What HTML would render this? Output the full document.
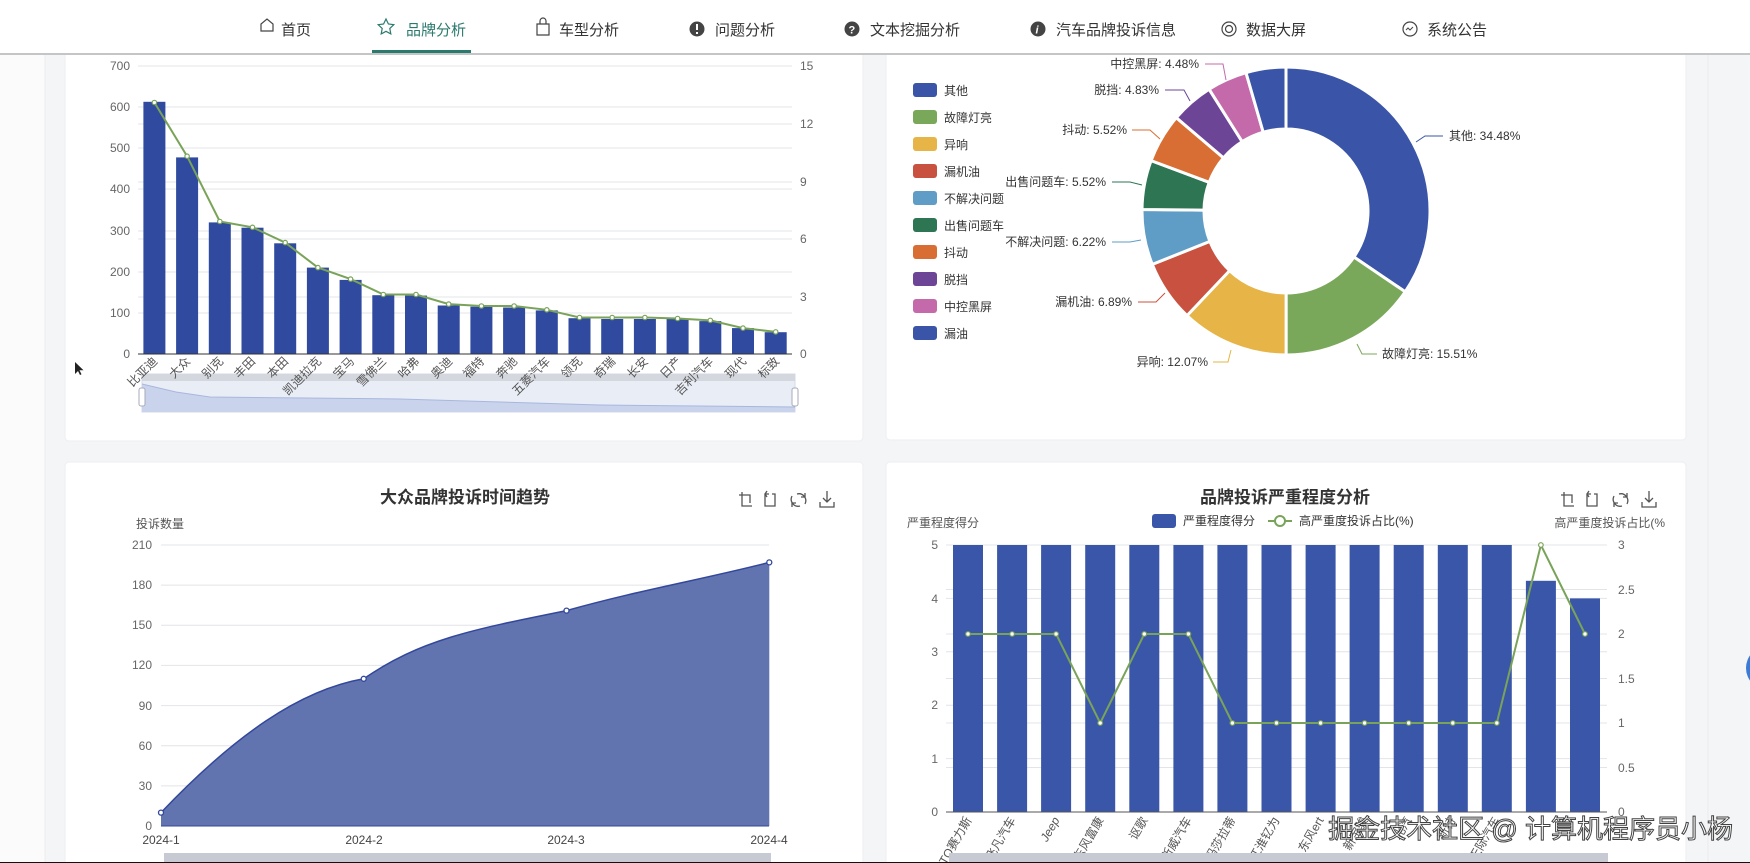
<!DOCTYPE html>
<html><head><meta charset="utf-8"><style>
html,body{margin:0;padding:0;width:1750px;height:863px;overflow:hidden;background:#f4f5f7;font-family:"Liberation Sans","Noto Sans CJK SC",sans-serif;}
svg{position:absolute;left:0;top:0}
text{font-family:"Liberation Sans","Noto Sans CJK SC",sans-serif;}
</style></head><body>
<svg width="1750" height="863" viewBox="0 0 1750 863" xmlns="http://www.w3.org/2000/svg">
<!-- side lines -->
<rect x="0" y="0" width="45" height="863" fill="#fbfbfc"/>
<line x1="45" y1="0" x2="45" y2="863" stroke="#ececee"/>
<line x1="1708" y1="0" x2="1708" y2="863" stroke="#ececee"/>
<!-- cards -->
<rect x="65" y="40" width="798" height="401" rx="4" fill="#fff" stroke="#eceef1"/>
<rect x="886" y="40" width="800" height="400" rx="4" fill="#fff" stroke="#eceef1"/>
<rect x="65" y="462" width="798" height="420" rx="4" fill="#fff" stroke="#eceef1"/>
<rect x="886" y="462" width="800" height="420" rx="4" fill="#fff" stroke="#eceef1"/>
<circle cx="1768" cy="668" r="22" fill="#3b7bd8"/>

<!-- NAV -->
<rect x="0" y="0" width="1750" height="53" fill="#fff"/>
<rect x="0" y="53" width="1750" height="2" fill="#c4c5c7"/>
<rect x="372" y="50" width="99" height="3" fill="#2b7a6e"/>
<g font-size="15" fill="#333">
<path d="M261 31v-7l6-5 6 5v7z" fill="none" stroke="#444" stroke-width="1.2"/>
<text x="281" y="35">首页</text>
<path d="M386 19l2.4 5 5.4.7-4 3.8 1 5.4-4.8-2.6-4.8 2.6 1-5.4-4-3.8 5.4-.7z" fill="none" stroke="#2b7a6e" stroke-width="1.2"/>
<text x="406" y="35" fill="#2b7a6e">品牌分析</text>
<path d="M537 24h12v11h-12z M540 24v-3a3 3 0 0 1 6 0v3" fill="none" stroke="#444" stroke-width="1.2"/>
<text x="559" y="35">车型分析</text>
<circle cx="697" cy="29" r="7.5" fill="#444"/><rect x="696" y="24" width="2" height="6" fill="#fff"/><rect x="696" y="32" width="2" height="2" fill="#fff"/>
<text x="715" y="35">问题分析</text>
<circle cx="852" cy="29" r="7.5" fill="#444"/><text x="848.5" y="33.5" font-size="11" font-weight="bold" fill="#fff">?</text>
<text x="870" y="35">文本挖掘分析</text>
<circle cx="1038" cy="29" r="7.5" fill="#444"/><text x="1035.5" y="33.5" font-size="11" font-style="italic" font-weight="bold" fill="#fff">i</text>
<text x="1056" y="35">汽车品牌投诉信息</text>
<circle cx="1229" cy="29" r="7" fill="none" stroke="#444" stroke-width="1.2"/><circle cx="1229" cy="29" r="3.5" fill="none" stroke="#444" stroke-width="1.2"/>
<text x="1246" y="35">数据大屏</text>
<circle cx="1410" cy="29" r="7" fill="none" stroke="#444" stroke-width="1.2"/><path d="M1406 30l2-2 2 2 3-3" fill="none" stroke="#444"/>
<text x="1427" y="35">系统公告</text>
</g>

<!-- CHART 1 -->
<g stroke="#e3e4e8" stroke-width="1">
<line x1="138" y1="66" x2="792" y2="66"/><line x1="138" y1="107" x2="792" y2="107"/><line x1="138" y1="148" x2="792" y2="148"/><line x1="138" y1="189" x2="792" y2="189"/><line x1="138" y1="231" x2="792" y2="231"/><line x1="138" y1="272" x2="792" y2="272"/><line x1="138" y1="313" x2="792" y2="313"/>
<line x1="138" y1="124" x2="792" y2="124"/><line x1="138" y1="182" x2="792" y2="182"/><line x1="138" y1="239" x2="792" y2="239"/><line x1="138" y1="297" x2="792" y2="297"/>
</g>
<g font-size="12" fill="#666" text-anchor="end">
<text x="130" y="70">700</text><text x="130" y="111">600</text><text x="130" y="152">500</text><text x="130" y="193">400</text><text x="130" y="235">300</text><text x="130" y="276">200</text><text x="130" y="317">100</text><text x="130" y="358">0</text>
</g>
<g font-size="12" fill="#666">
<text x="800" y="70">15</text><text x="800" y="128">12</text><text x="800" y="186">9</text><text x="800" y="243">6</text><text x="800" y="301">3</text><text x="800" y="358">0</text>
</g>
<g fill="#2f4a9f">
<rect x="143.4" y="101.8" width="22" height="252.2"/><rect x="176.1" y="157.4" width="22" height="196.6"/><rect x="208.8" y="222.4" width="22" height="131.6"/><rect x="241.5" y="227.7" width="22" height="126.3"/><rect x="274.2" y="243.3" width="22" height="110.7"/><rect x="306.9" y="267.6" width="22" height="86.4"/><rect x="339.6" y="279.9" width="22" height="74.1"/><rect x="372.3" y="295.2" width="22" height="58.8"/><rect x="405" y="295.6" width="22" height="58.4"/><rect x="437.7" y="305.5" width="22" height="48.5"/><rect x="470.4" y="306.7" width="22" height="47.3"/><rect x="503.1" y="307.5" width="22" height="46.5"/><rect x="535.8" y="310.4" width="22" height="43.6"/><rect x="568.5" y="318.2" width="22" height="35.8"/><rect x="601.2" y="319" width="22" height="35"/><rect x="633.9" y="319" width="22" height="35"/><rect x="666.6" y="319" width="22" height="35"/><rect x="699.3" y="321.1" width="22" height="32.9"/><rect x="732" y="328.1" width="22" height="25.9"/><rect x="764.7" y="332.2" width="22" height="21.8"/>
</g>
<line x1="138" y1="354" x2="792" y2="354" stroke="#333"/>
<polyline fill="none" stroke="#7aa35a" stroke-width="2" points="154.4,102.5 187.1,156.2 219.8,221.5 252.5,227.3 285.2,242.6 317.9,267.6 350.6,279.1 383.3,294.5 416,294.5 448.7,304.1 481.4,306 514.1,306 546.8,309.8 579.5,317.5 612.2,317.5 644.9,317.5 677.6,318.5 710.3,320.4 743,328.1 775.7,331.9"/>
<g fill="#fff" stroke="#7aa35a" stroke-width="1.2">
<circle cx="154.4" cy="102.5" r="2.2"/><circle cx="187.1" cy="156.2" r="2.2"/><circle cx="219.8" cy="221.5" r="2.2"/><circle cx="252.5" cy="227.3" r="2.2"/><circle cx="285.2" cy="242.6" r="2.2"/><circle cx="317.9" cy="267.6" r="2.2"/><circle cx="350.6" cy="279.1" r="2.2"/><circle cx="383.3" cy="294.5" r="2.2"/><circle cx="416" cy="294.5" r="2.2"/><circle cx="448.7" cy="304.1" r="2.2"/><circle cx="481.4" cy="306" r="2.2"/><circle cx="514.1" cy="306" r="2.2"/><circle cx="546.8" cy="309.8" r="2.2"/><circle cx="579.5" cy="317.5" r="2.2"/><circle cx="612.2" cy="317.5" r="2.2"/><circle cx="644.9" cy="317.5" r="2.2"/><circle cx="677.6" cy="318.5" r="2.2"/><circle cx="710.3" cy="320.4" r="2.2"/><circle cx="743" cy="328.1" r="2.2"/><circle cx="775.7" cy="331.9" r="2.2"/>
</g>
<!-- slider -->
<rect x="142" y="374" width="653" height="38" fill="#e9edf6" stroke="#d3dae9"/>
<rect x="142" y="374" width="653" height="7" fill="#d4d7de"/>
<path d="M142 384 L176 392 L210 397 L400 399 L600 405 L795 407 L795 412 L142 412Z" fill="#c9d3ec"/>
<path d="M142 384 L176 392 L210 397 L400 399 L600 405 L795 407" fill="none" stroke="#a9b7de"/>
<rect x="139" y="388" width="6" height="18" rx="2" fill="#fff" stroke="#aab"/>
<rect x="792" y="388" width="6" height="18" rx="2" fill="#fff" stroke="#aab"/>
<g font-size="12" fill="#555" text-anchor="end">
<text transform="translate(158,362) rotate(-45)">比亚迪</text><text transform="translate(191,362) rotate(-45)">大众</text><text transform="translate(224,362) rotate(-45)">别克</text><text transform="translate(256,362) rotate(-45)">丰田</text><text transform="translate(289,362) rotate(-45)">本田</text><text transform="translate(322,362) rotate(-45)">凯迪拉克</text><text transform="translate(355,362) rotate(-45)">宝马</text><text transform="translate(387,362) rotate(-45)">雪佛兰</text><text transform="translate(420,362) rotate(-45)">哈弗</text><text transform="translate(453,362) rotate(-45)">奥迪</text><text transform="translate(485,362) rotate(-45)">福特</text><text transform="translate(518,362) rotate(-45)">奔驰</text><text transform="translate(551,362) rotate(-45)">五菱汽车</text><text transform="translate(583,362) rotate(-45)">领克</text><text transform="translate(616,362) rotate(-45)">奇瑞</text><text transform="translate(649,362) rotate(-45)">长安</text><text transform="translate(682,362) rotate(-45)">日产</text><text transform="translate(714,362) rotate(-45)">吉利汽车</text><text transform="translate(747,362) rotate(-45)">现代</text><text transform="translate(780,362) rotate(-45)">标致</text>
</g>
<path d="M75 362v12l3-3 2 4 1.5-.7-2-4h4z" fill="#222"/>

<!-- CHART 2 PIE -->
<g stroke="#fff" stroke-width="3" stroke-linejoin="round">
<path d="M1286 67A144 144 0 0 1 1405.2 291.8L1353.9 257A82 82 0 0 0 1286 129Z" fill="#3a55a8"/>
<path d="M1405.2 291.8A144 144 0 0 1 1286.1 355L1286.1 293A82 82 0 0 0 1353.9 257Z" fill="#7aa85a"/>
<path d="M1286.1 355A144 144 0 0 1 1187 315.6L1229.6 270.6A82 82 0 0 0 1286.1 293Z" fill="#e6b447"/>
<path d="M1187 315.6A144 144 0 0 1 1152.3 264.4L1209.9 241.4A82 82 0 0 0 1229.6 270.6Z" fill="#c8513f"/>
<path d="M1152.3 264.4A144 144 0 0 1 1142 209.5L1204 210.1A82 82 0 0 0 1209.9 241.4Z" fill="#5f9dc6"/>
<path d="M1142 209.5A144 144 0 0 1 1151.1 160.6L1209.2 182.3A82 82 0 0 0 1204 210.1Z" fill="#2e7553"/>
<path d="M1151.1 160.6A144 144 0 0 1 1176.3 117.7L1223.5 157.9A82 82 0 0 0 1209.2 182.3Z" fill="#d86e33"/>
<path d="M1176.3 117.7A144 144 0 0 1 1209.1 89.2L1242.2 141.7A82 82 0 0 0 1223.5 157.9Z" fill="#6d4597"/>
<path d="M1209.1 89.2A144 144 0 0 1 1246 72.7L1263.2 132.2A82 82 0 0 0 1242.2 141.7Z" fill="#c46aab"/>
<path d="M1246 72.7A144 144 0 0 1 1286 67L1286 129A82 82 0 0 0 1263.2 132.2Z" fill="#3a55a8"/>
</g>
<g fill="none" stroke-width="1">
<polyline points="1416,142 1425,136 1443,136" stroke="#3a55a8"/>
<polyline points="1357,344 1362,354 1377,354" stroke="#7aa85a"/>
<polyline points="1231,350 1228,362 1213,362" stroke="#e6b447"/>
<polyline points="1165,293 1156,302 1138,302" stroke="#c8513f"/>
<polyline points="1141,240 1130,242 1112,242" stroke="#5f9dc6"/>
<polyline points="1142,185 1130,182 1112,182" stroke="#2e7553"/>
<polyline points="1160,139 1150,130 1132,130" stroke="#d86e33"/>
<polyline points="1190,101 1184,90 1165,90" stroke="#6d4597"/>
<polyline points="1226,80 1223,64 1205,64" stroke="#c46aab"/>
</g>
<g font-size="12" fill="#333">
<text x="1449" y="140">其他: 34.48%</text>
<text x="1382" y="358">故障灯亮: 15.51%</text>
<text x="1208" y="366" text-anchor="end">异响: 12.07%</text>
<text x="1132" y="306" text-anchor="end">漏机油: 6.89%</text>
<text x="1106" y="246" text-anchor="end">不解决问题: 6.22%</text>
<text x="1106" y="186" text-anchor="end">出售问题车: 5.52%</text>
<text x="1127" y="134" text-anchor="end">抖动: 5.52%</text>
<text x="1159" y="94" text-anchor="end">脱挡: 4.83%</text>
<text x="1199" y="68" text-anchor="end">中控黑屏: 4.48%</text>
</g>
<g font-size="12" fill="#333">
<rect x="913" y="83" width="24" height="14" rx="3" fill="#3a55a8"/><text x="944" y="95">其他</text>
<rect x="913" y="110" width="24" height="14" rx="3" fill="#7aa85a"/><text x="944" y="122">故障灯亮</text>
<rect x="913" y="137" width="24" height="14" rx="3" fill="#e6b447"/><text x="944" y="149">异响</text>
<rect x="913" y="164" width="24" height="14" rx="3" fill="#c8513f"/><text x="944" y="176">漏机油</text>
<rect x="913" y="191" width="24" height="14" rx="3" fill="#5f9dc6"/><text x="944" y="203">不解决问题</text>
<rect x="913" y="218" width="24" height="14" rx="3" fill="#2e7553"/><text x="944" y="230">出售问题车</text>
<rect x="913" y="245" width="24" height="14" rx="3" fill="#d86e33"/><text x="944" y="257">抖动</text>
<rect x="913" y="272" width="24" height="14" rx="3" fill="#6d4597"/><text x="944" y="284">脱挡</text>
<rect x="913" y="299" width="24" height="14" rx="3" fill="#c46aab"/><text x="944" y="311">中控黑屏</text>
<rect x="913" y="326" width="24" height="14" rx="3" fill="#3a55a8"/><text x="944" y="338">漏油</text>
</g>

<!-- toolbox icon group def -->
<defs>
<g id="tb" fill="none" stroke="#555" stroke-width="1.3">
<path d="M3 3v14h10 M0 6h11v8"/>
<path d="M30 5h-4v12h10v-12h-3 M28 2l-2 3 2 3"/>
<path d="M58 5a7 7 0 0 1 8 10 M61 17a7 7 0 0 1-8-10 M66 4v4h-4 M53 18v-4h4"/>
<path d="M88 2v11 M84 9l4 4 4-4 M81 13v5h14v-5"/>
</g>
</defs>

<!-- CHART 3 -->
<text x="465" y="503" font-size="17" font-weight="bold" fill="#333" text-anchor="middle">大众品牌投诉时间趋势</text>
<use href="#tb" x="739" y="489"/>
<text x="136" y="528" font-size="12" fill="#555">投诉数量</text>
<g stroke="#e3e4e8">
<line x1="161" y1="545" x2="769" y2="545"/><line x1="161" y1="585.1" x2="769" y2="585.1"/><line x1="161" y1="625.3" x2="769" y2="625.3"/><line x1="161" y1="665.4" x2="769" y2="665.4"/><line x1="161" y1="705.6" x2="769" y2="705.6"/><line x1="161" y1="745.7" x2="769" y2="745.7"/><line x1="161" y1="785.9" x2="769" y2="785.9"/>
</g>
<g font-size="12" fill="#666" text-anchor="end">
<text x="152" y="549">210</text><text x="152" y="589">180</text><text x="152" y="629">150</text><text x="152" y="669">120</text><text x="152" y="710">90</text><text x="152" y="750">60</text><text x="152" y="790">30</text><text x="152" y="830">0</text>
</g>
<path d="M161 812.6 C235 735 300 690 363.7 678.8 C420 640 470 630 566.5 610.6 C640 590 700 580 769.3 562.4 L769.3 826 L161 826Z" fill="#6274b0"/>
<path d="M161 812.6 C235 735 300 690 363.7 678.8 C420 640 470 630 566.5 610.6 C640 590 700 580 769.3 562.4" fill="none" stroke="#33489a" stroke-width="1.5"/>
<line x1="161" y1="826" x2="769" y2="826" stroke="#33489a"/>
<g fill="#fff" stroke="#33489a" stroke-width="1.3"><circle cx="161" cy="812.6" r="2.5"/><circle cx="363.7" cy="678.8" r="2.5"/><circle cx="566.5" cy="610.6" r="2.5"/><circle cx="769.3" cy="562.4" r="2.5"/></g>
<g font-size="12" fill="#444" text-anchor="middle">
<text x="161" y="844">2024-1</text><text x="364" y="844">2024-2</text><text x="566" y="844">2024-3</text><text x="769" y="844">2024-4</text>
</g>
<rect x="164" y="853" width="607" height="9" fill="#c7cad3"/>

<!-- CHART 4 -->
<text x="1285" y="503" font-size="17" font-weight="bold" fill="#333" text-anchor="middle">品牌投诉严重程度分析</text>
<use href="#tb" x="1561" y="489"/>
<rect x="1152" y="514" width="24" height="14" rx="3" fill="#3a56a8"/>
<text x="1183" y="525" font-size="12" fill="#333">严重程度得分</text>
<line x1="1268" y1="521" x2="1292" y2="521" stroke="#7aa35a" stroke-width="2"/><circle cx="1280" cy="521" r="5" fill="#fff" stroke="#7aa35a" stroke-width="2"/>
<text x="1299" y="525" font-size="12" fill="#333">高严重度投诉占比(%)</text>
<text x="907" y="527" font-size="12" fill="#555">严重程度得分</text>
<text x="1665" y="527" font-size="12" fill="#555" text-anchor="end">高严重度投诉占比(%</text>
<g stroke="#e3e4e8">
<line x1="946" y1="545" x2="1607" y2="545"/><line x1="946" y1="598.4" x2="1607" y2="598.4"/><line x1="946" y1="651.8" x2="1607" y2="651.8"/><line x1="946" y1="705.2" x2="1607" y2="705.2"/><line x1="946" y1="758.6" x2="1607" y2="758.6"/>
<line x1="946" y1="589.5" x2="1607" y2="589.5"/><line x1="946" y1="634" x2="1607" y2="634"/><line x1="946" y1="678.5" x2="1607" y2="678.5"/><line x1="946" y1="723" x2="1607" y2="723"/><line x1="946" y1="767.5" x2="1607" y2="767.5"/>
</g>
<g font-size="12" fill="#666" text-anchor="end">
<text x="938" y="549">5</text><text x="938" y="603">4</text><text x="938" y="656">3</text><text x="938" y="709">2</text><text x="938" y="763">1</text><text x="938" y="816">0</text>
</g>
<g font-size="12" fill="#666">
<text x="1618" y="549">3</text><text x="1618" y="594">2.5</text><text x="1618" y="638">2</text><text x="1618" y="683">1.5</text><text x="1618" y="727">1</text><text x="1618" y="772">0.5</text><text x="1618" y="816">0</text>
</g>
<g fill="#3a56a8">
<rect x="953" y="545" width="30" height="267"/><rect x="997.1" y="545" width="30" height="267"/><rect x="1041.1" y="545" width="30" height="267"/><rect x="1085.2" y="545" width="30" height="267"/><rect x="1129.3" y="545" width="30" height="267"/><rect x="1173.4" y="545" width="30" height="267"/><rect x="1217.4" y="545" width="30" height="267"/><rect x="1261.5" y="545" width="30" height="267"/><rect x="1305.6" y="545" width="30" height="267"/><rect x="1349.6" y="545" width="30" height="267"/><rect x="1393.7" y="545" width="30" height="267"/><rect x="1437.8" y="545" width="30" height="267"/><rect x="1481.8" y="545" width="30" height="267"/><rect x="1525.9" y="580.8" width="30" height="231.2"/><rect x="1570" y="598.4" width="30" height="213.6"/>
</g>
<line x1="946" y1="812" x2="1607" y2="812" stroke="#555"/>
<polyline fill="none" stroke="#7aa35a" stroke-width="2" points="968,634 1012.1,634 1056.1,634 1100.2,723 1144.3,634 1188.4,634 1232.4,723 1276.5,723 1320.6,723 1364.6,723 1408.7,723 1452.8,723 1496.8,723 1540.9,545 1585,634"/>
<g fill="#fff" stroke="#7aa35a" stroke-width="1.2">
<circle cx="968" cy="634" r="2.3"/><circle cx="1012.1" cy="634" r="2.3"/><circle cx="1056.1" cy="634" r="2.3"/><circle cx="1100.2" cy="723" r="2.3"/><circle cx="1144.3" cy="634" r="2.3"/><circle cx="1188.4" cy="634" r="2.3"/><circle cx="1232.4" cy="723" r="2.3"/><circle cx="1276.5" cy="723" r="2.3"/><circle cx="1320.6" cy="723" r="2.3"/><circle cx="1364.6" cy="723" r="2.3"/><circle cx="1408.7" cy="723" r="2.3"/><circle cx="1452.8" cy="723" r="2.3"/><circle cx="1496.8" cy="723" r="2.3"/><circle cx="1540.9" cy="545" r="2.3"/><circle cx="1585" cy="634" r="2.3"/>
</g>
<g font-size="12" fill="#555" text-anchor="end">
<text transform="translate(972,820) rotate(-60)">AITO赛力斯</text><text transform="translate(1016,820) rotate(-60)">飞凡汽车</text><text transform="translate(1060,820) rotate(-60)" font-style="italic">Jeep</text><text transform="translate(1104,820) rotate(-60)">东风富康</text><text transform="translate(1148,820) rotate(-60)">讴歌</text><text transform="translate(1192,820) rotate(-60)">斯威汽车</text><text transform="translate(1236,820) rotate(-60)">玛莎拉蒂</text><text transform="translate(1280,820) rotate(-60)">江淮钇为</text><text transform="translate(1324,820) rotate(-60)">东风ert</text><text transform="translate(1368,820) rotate(-60)">新宝骏</text><text transform="translate(1412,820) rotate(-60)">北汽</text><text transform="translate(1456,820) rotate(-60)">新特</text><text transform="translate(1500,820) rotate(-60)">天际汽车</text>
</g>
<rect x="949" y="853" width="659" height="9" fill="#c7cad3"/>
<text x="1733" y="838" font-size="26" fill="#fff" stroke="#333" stroke-width="1" text-anchor="end" opacity="0.92">掘金技术社区 @ 计算机程序员小杨</text>
<rect x="0" y="862" width="1750" height="1" fill="#111"/>
</svg>
</body></html>
